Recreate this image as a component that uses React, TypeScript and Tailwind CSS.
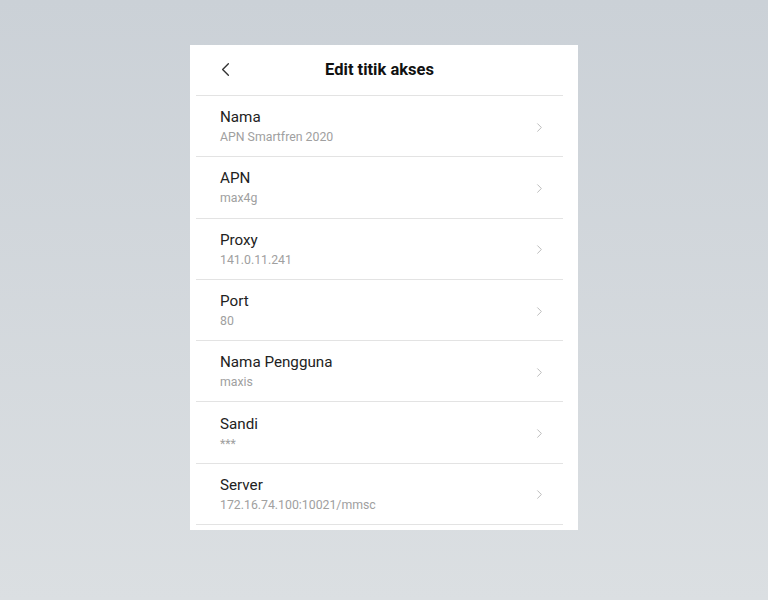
import { ChevronLeft, ChevronRight } from 'lucide-react';

const rows = [
  { label: 'Nama', value: 'APN Smartfren 2020' },
  { label: 'APN', value: 'max4g' },
  { label: 'Proxy', value: '141.0.11.241' },
  { label: 'Port', value: '80' },
  { label: 'Nama Pengguna', value: 'maxis' },
  { label: 'Sandi', value: '***' },
  { label: 'Server', value: '172.16.74.100:10021/mmsc' },
];

export default function App() {
  return (
    <div className="w-[768px] h-[600px] overflow-hidden bg-gradient-to-b from-[#cbd1d7] to-[#dbdfe2] pt-[45px] pl-[190px] font-['Roboto','Noto_Sans',sans-serif]">
      <div className="w-[388px] h-[485px] bg-white overflow-hidden">
        {/* header */}
        <div className="relative h-[51px] ml-[6px] mr-[15px] border-b border-[#e3e3e3] flex items-center justify-center">
          <ChevronLeft className="absolute left-[18px] top-[13px] w-[23px] h-[23px] text-[#333]" strokeWidth={1.4} />
          <span className="text-[16.5px] font-bold text-[#111]">Edit titik akses</span>
        </div>

        {rows.map((r) => (
          <div
            key={r.label}
            className="h-[61.3px] ml-[6px] mr-[15px] border-b border-[#e3e3e3] flex items-center pl-[24px] pr-[16px]"
          >
            <div className="flex-1 flex flex-col mt-[2px]">
              <span className="text-[15.2px] leading-[20px] text-[#222]">{r.label}</span>
              <span className="text-[12.3px] leading-[20px] text-[#a0a0a0]">{r.value}</span>
            </div>
            <ChevronRight className="w-[15px] h-[15px] text-[#bdbdbd] mt-[2px]" strokeWidth={1.6} />
          </div>
        ))}
      </div>
    </div>
  );
}
